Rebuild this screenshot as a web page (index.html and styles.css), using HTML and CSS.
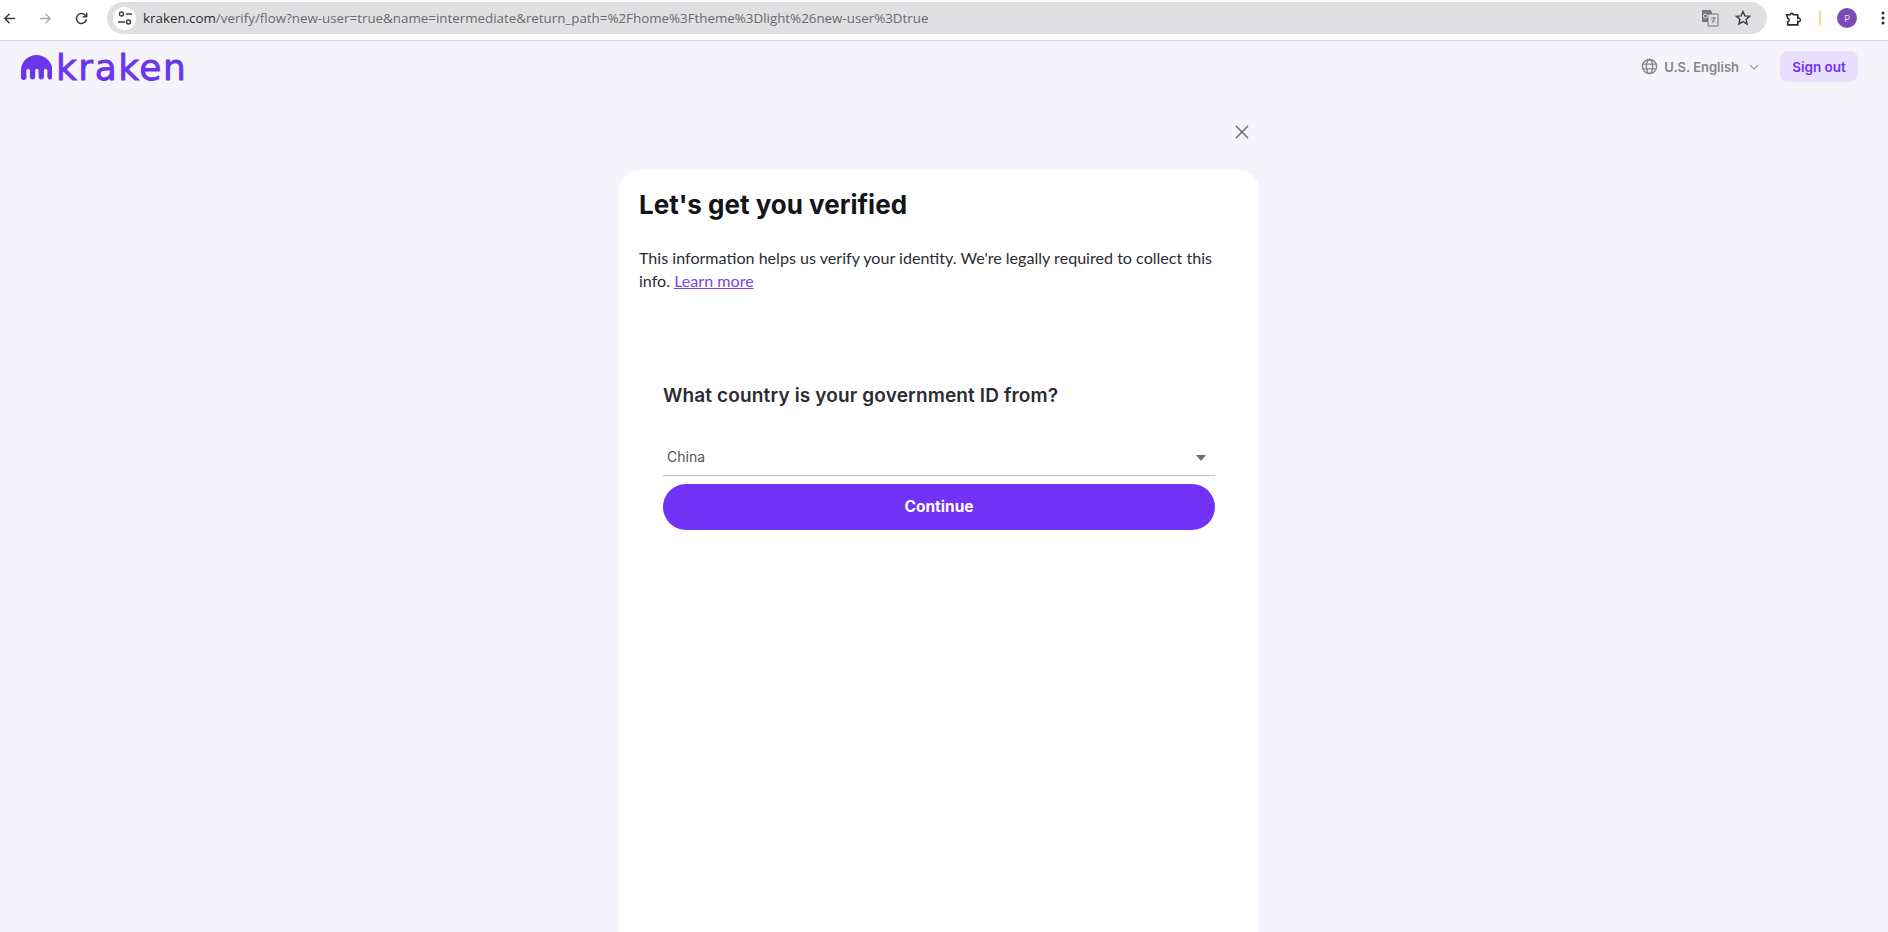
FILE: index.html
```html
<!DOCTYPE html>
<html lang="en">

<head>
    <meta charset="UTF-8">
    <meta name="viewport" content="width=device-width, initial-scale=1.0">
    <title>Kraken - Verify</title>
    <link rel="stylesheet" href="styles.css">
</head>

<body>
    <div class="toolbar">
        <div class="nav-icons">
            <svg class="tool-icon" viewBox="0 0 16 16"><path d="M14 8H3M8 3L3 8l5 5" fill="none" stroke="#3c3c40" stroke-width="1.6"/></svg>
            <svg class="tool-icon" viewBox="0 0 16 16"><path d="M2 8h11M8 3l5 5-5 5" fill="none" stroke="#a9a9ad" stroke-width="1.4"/></svg>
            <svg class="tool-icon" viewBox="0 0 16 16"><path d="M13.2 8.6a5.3 5.3 0 1 1-1.4-4.2L13.5 6M13.5 1.8V6H9.4" fill="none" stroke="#3c3c40" stroke-width="1.6"/></svg>
        </div>
        <div class="address-bar">
            <span class="site-chip">
                <svg viewBox="0 0 16 16" width="16" height="16"><circle cx="4.5" cy="4" r="2" fill="none" stroke="#3c3c40" stroke-width="1.4"/><path d="M9 4h6M1 12h7" stroke="#3c3c40" stroke-width="1.4"/><circle cx="11.5" cy="12" r="2" fill="none" stroke="#3c3c40" stroke-width="1.4"/></svg>
            </span>
            <span class="url"><span class="url-host">kraken.com</span>/verify/flow?new-user=true&amp;name=intermediate&amp;return_path=%2Fhome%3Ftheme%3Dlight%26new-user%3Dtrue</span>
            <svg class="translate-icon" viewBox="0 0 18 18"><path d="M1 1h9l1 3v9H1z" fill="#77777c"/><rect x="7" y="5" width="10" height="12" fill="#e0dfe1" stroke="#77777c" stroke-width="1"/><path d="M10 9h5M12.500 8v1M11 14l3-5M11 10.500l3 3" stroke="#77777c" stroke-width="0.9" fill="none"/><circle cx="4.500" cy="7" r="2" fill="none" stroke="#e0dfe1" stroke-width="1"/></svg>
            <svg class="star-icon" viewBox="0 0 16 16"><path d="M8 1.600l1.900 4.300 4.700.4-3.600 3.100 1.100 4.600L8 11.600 3.900 14l1.100-4.600L1.400 6.300l4.700-.4z" fill="none" stroke="#3c3c40" stroke-width="1.4"/></svg>
        </div>
        <div class="browser-actions">
            <svg class="ext-icon" viewBox="0 0 16 16"><path d="M1.500 4.500h3.200a1.700 1.700 0 0 1 3.300 0h4v3.300a1.700 1.700 0 0 1 2.500 1.500 1.700 1.700 0 0 1-2.500 1.500v3.200H2.500v-2.800a1.800 1.800 0 0 0 0-3.500z" fill="none" stroke="#2a2a2e" stroke-width="1.500"/></svg>
            <span class="ext-divider"></span>
            <span class="avatar">P</span>
            <svg class="dots-icon" viewBox="0 0 4 16"><circle cx="2" cy="3" r="1.500"/><circle cx="2" cy="8" r="1.500"/><circle cx="2" cy="13" r="1.500"/></svg>
        </div>
    </div>

    <header class="site-header">
        <div class="logo">
            <svg class="logo-mark" viewBox="0 0 31 25"><path d="M15.500 0C6.900 0 0 6.900 0 15.500v6.700a2.700 2.700 0 0 0 5.400 0v-6.700a1.800 1.800 0 0 1 3.500 0v6.700a2.700 2.700 0 0 0 5.300 0v-6.700a1.700 1.700 0 0 1 3.400 0v6.700a2.700 2.700 0 0 0 5.300 0v-6.700a1.800 1.800 0 0 1 3.500 0v6.700a2.700 2.700 0 0 0 5.300 0v-6.700C31 6.900 24.100 0 15.500 0z" fill="#6a35ec"/></svg>
            <span class="logo-word">kraken</span>
        </div>
        <div class="header-right">
            <div class="lang-select">
                <svg class="globe-icon" viewBox="0 0 18 18"><g fill="none" stroke="#85858f" stroke-width="1.500"><circle cx="9" cy="9" r="7.500"/><ellipse cx="9" cy="9" rx="3.300" ry="7.500"/><path d="M1.500 6.500h15M1.500 11.500h15"/></g></svg>
                <span>U.S. English</span>
                <svg class="chevron-icon" viewBox="0 0 10 6"><path d="M1 1l4 4 4-4" fill="none" stroke="#9a9aa3" stroke-width="1.200"/></svg>
            </div>
            <button class="sign-out">Sign out</button>
        </div>
    </header>

    <main class="page">
        <div class="flow">
            <div class="close-row">
                <svg class="close-icon" viewBox="0 0 14 14"><path d="M1 1l12 12M13 1L1 13" stroke="#686b82" stroke-width="1.500"/></svg>
            </div>
            <div class="card">
                <h1>Let's get you verified</h1>
                <p class="intro">This information helps us verify your identity. We're legally required to collect this info. <a href="#">Learn more</a></p>
                <div class="question">
                    <h2>What country is your government ID from?</h2>
                    <div class="select-field">
                        <span>China</span>
                        <span class="select-arrow"></span>
                    </div>
                    <button class="continue-btn">Continue</button>
                </div>
            </div>
        </div>
    </main>
</body>

</html>
```

FILE: styles.css
```css
* {
    box-sizing: border-box;
}

html,
body {
    height: 100%;
}

body {
    margin: 0;
    overflow: hidden;
    font-family: Inter, "Liberation Sans", sans-serif;
    background-color: #f5f4fb;
}

.toolbar {
    display: flex;
    align-items: center;
    height: 41px;
    padding: 2px 0 6px 2px;
    background-color: #fff;
    border-bottom: 1px solid #d5d4db;
}

.nav-icons {
    display: flex;
    gap: 21px;
    width: 105px;
}

.tool-icon {
    width: 15px;
    height: 15px;
}

.address-bar {
    display: flex;
    align-items: center;
    width: 1660px;
    height: 32px;
    padding: 0 16px 0 6px;
    background-color: #e0dfe1;
    border-radius: 16px;
}

.site-chip {
    display: flex;
    align-items: center;
    justify-content: center;
    width: 23px;
    height: 23px;
    margin-right: 7px;
    background-color: #fff;
    border-radius: 50%;
}

.url {
    flex: 1;
    font-family: "Open Sans", sans-serif;
    font-size: 13.35px;
    color: #6a6a6e;
}

.url-host {
    color: #2b2b2f;
}

.translate-icon {
    width: 18px;
    height: 18px;
    margin-right: 16px;
}

.star-icon {
    width: 16px;
    height: 16px;
}

.browser-actions {
    display: flex;
    align-items: center;
    padding-left: 18px;
}

.ext-icon {
    width: 17px;
    height: 17px;
}

.ext-divider {
    width: 2px;
    height: 14px;
    margin: 0 16px 0 17px;
    background-color: #f3dd7c;
}

.avatar {
    display: flex;
    align-items: center;
    justify-content: center;
    width: 20px;
    height: 20px;
    color: #e8dcf5;
    font-size: 9px;
    background-color: #7b4bb8;
    border-radius: 50%;
}

.dots-icon {
    width: 4px;
    height: 16px;
    margin-left: 24px;
    fill: #2a2a2e;
}

.site-header {
    display: flex;
    align-items: center;
    justify-content: space-between;
    padding: 10px 30px 0 21px;
}

.logo {
    display: flex;
    align-items: center;
    gap: 4px;
    height: 31px;
    padding-top: 2px;
}

.logo-mark {
    width: 31px;
    height: 25px;
}

.logo-word {
    font-family: "DejaVu Sans", sans-serif;
    font-size: 36px;
    line-height: 31px;
    color: #6a35ec;
    letter-spacing: 1.5px;
    -webkit-text-stroke: 0.8px #6a35ec;
}

.header-right {
    display: flex;
    align-items: center;
}

.lang-select {
    display: flex;
    align-items: center;
    margin-right: 21px;
    font-size: 13px;
    font-weight: 600;
    color: #85858f;
}

.globe-icon {
    width: 17px;
    height: 17px;
    margin-right: 6px;
}

.chevron-icon {
    width: 10px;
    height: 6px;
    margin-left: 10px;
}

.sign-out {
    width: 78px;
    height: 31px;
    padding: 0;
    font-family: inherit;
    font-size: 13.5px;
    font-weight: 600;
    color: #7132f5;
    background-color: #e8e0fc;
    border: none;
    border-radius: 8px;
}

.page {
    padding-left: 619px;
}

.flow {
    width: 640px;
}

.close-row {
    display: flex;
    justify-content: flex-end;
    height: 88px;
    padding: 43px 10px 0 0;
}

.close-icon {
    width: 14px;
    height: 14px;
}

.card {
    min-height: 800px;
    padding: 19px 20px 0 20px;
    background-color: #fff;
    border-radius: 20px;
}

h1 {
    margin: 0 0 26px;
    font-size: 26px;
    line-height: 32px;
    font-weight: 700;
    color: #14141a;
}

.intro {
    margin: 0;
    font-family: Lato, sans-serif;
    font-size: 16.1px;
    line-height: 22.5px;
    color: #2b2b33;
}

.intro a {
    color: #7a45ea;
}

.question {
    padding: 92px 24px 0 24px;
}

h2 {
    margin: 0 0 33px;
    font-size: 19px;
    line-height: 24px;
    font-weight: 600;
    letter-spacing: 0.14px;
    color: #2b2b33;
}

.select-field {
    display: flex;
    align-items: center;
    justify-content: space-between;
    height: 35px;
    padding: 0 9px 4px 4px;
    font-size: 14px;
    color: #55555c;
    border-bottom: 1px solid #bdbcc6;
}

.select-arrow {
    width: 0;
    height: 0;
    margin-top: 3px;
    border-top: 6px solid #6e6e76;
    border-left: 5px solid transparent;
    border-right: 5px solid transparent;
}

.continue-btn {
    display: block;
    width: 100%;
    height: 46px;
    margin-top: 8px;
    padding-bottom: 3px;
    font-family: inherit;
    font-size: 15.5px;
    font-weight: 700;
    color: #fff;
    background-color: #7132f5;
    border: none;
    border-radius: 23px;
}
```
